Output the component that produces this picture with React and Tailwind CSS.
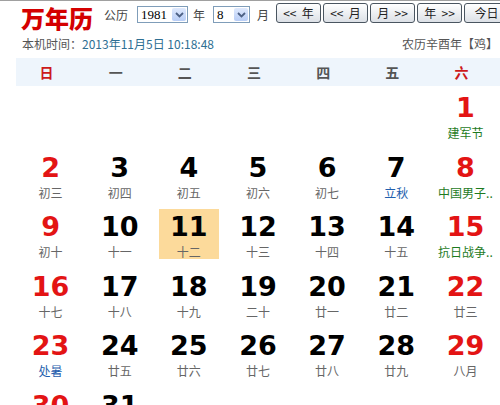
const RED = "text-[#e31414]";

const days = [
  { d: 1, l: "建军节", lc: "text-[#1e7b1e]", red: true },
  { d: 2, l: "初三", red: true },
  { d: 3, l: "初四" },
  { d: 4, l: "初五" },
  { d: 5, l: "初六" },
  { d: 6, l: "初七" },
  { d: 7, l: "立秋", lc: "text-[#1f5fae]" },
  { d: 8, l: "中国男子..", lc: "text-[#1e7b1e]", red: true },
  { d: 9, l: "初十", red: true },
  { d: 10, l: "十一" },
  { d: 11, l: "十二", today: true },
  { d: 12, l: "十三" },
  { d: 13, l: "十四" },
  { d: 14, l: "十五" },
  { d: 15, l: "抗日战争..", lc: "text-[#1e7b1e]", red: true },
  { d: 16, l: "十七", red: true },
  { d: 17, l: "十八" },
  { d: 18, l: "十九" },
  { d: 19, l: "二十" },
  { d: 20, l: "廿一" },
  { d: 21, l: "廿二" },
  { d: 22, l: "廿三", red: true },
  { d: 23, l: "处暑", lc: "text-[#1f5fae]", red: true },
  { d: 24, l: "廿五" },
  { d: 25, l: "廿六" },
  { d: 26, l: "廿七" },
  { d: 27, l: "廿八" },
  { d: 28, l: "廿九" },
  { d: 29, l: "八月", red: true },
  { d: 30, l: "初二", red: true },
  { d: 31, l: "初三" },
];

const weekdays = ["日", "一", "二", "三", "四", "五", "六"];

function Select({ value, width }) {
  return (
    <div className={`flex h-[17px] shrink-0 border border-[#7f9db9] bg-white ${width}`}>
      <span className="flex-1 pl-[3px] text-[13px] leading-[15px] text-black font-['Liberation_Serif',serif]">
        {value}
      </span>
      <span className="m-[1px] flex w-[14px] items-center justify-center rounded-[2px] bg-gradient-to-b from-[#dfe9fd] to-[#b8cdf6]">
        <svg width="9" height="6" viewBox="0 0 9 6">
          <path d="M1 1 L4.5 4.5 L8 1" fill="none" stroke="#4d6185" strokeWidth="1.8" />
        </svg>
      </span>
    </div>
  );
}

function NavButton({ children }) {
  return (
    <button className="flex h-[20px] w-[45px] shrink-0 items-center justify-center rounded-[3px] border border-[#4a5560] bg-gradient-to-b from-white to-[#dce0e6] text-[12px] leading-[14px] text-[#222] whitespace-pre">
      {children}
    </button>
  );
}

function Cell({ item }) {
  if (!item) return <div className="h-[59.5px]" />;
  return (
    <div className="flex h-[59.5px] justify-center">
      <div
        className={`flex h-[50px] w-[60px] flex-col items-center pt-[4px] ${
          item.today ? "bg-[#fcda9b]" : ""
        }`}
      >
        <span
          className={`text-[27px] font-bold leading-[28px] font-['DejaVu_Sans',sans-serif] ${
            item.red ? RED : "text-black"
          }`}
        >
          {item.d}
        </span>
        <span
          className={`mt-[3px] whitespace-nowrap text-[12px] leading-[16px] ${
            item.lc || "text-[#666]"
          }`}
        >
          {item.l}
        </span>
      </div>
    </div>
  );
}

export default function App() {
  const cells = [...Array(6).fill(null), ...days];
  while (cells.length % 7) cells.push(null);

  return (
    <div className="h-[405px] w-[500px] overflow-hidden border-t border-[#a0a0a0] bg-white font-['Noto_Sans_CJK_SC',sans-serif]">
      {/* top bar */}
      <div className="flex h-[29px] items-start whitespace-nowrap pl-[21px]">
        <span className="mt-[3px] w-[72px] shrink-0 text-[24px] font-black leading-[28px] text-[#d40000]">
          万年历
        </span>
        <span className="ml-[11px] mt-[7px] w-[24px] shrink-0 text-[12px] leading-[14px] text-[#444]">
          公历
        </span>
        <div className="ml-[9px] mt-[5px] shrink-0">
          <Select value="1981" width="w-[51px]" />
        </div>
        <span className="ml-[5px] mt-[7px] w-[12px] shrink-0 text-[12px] leading-[14px] text-[#444]">年</span>
        <div className="ml-[8px] mt-[5px] shrink-0">
          <Select value="8" width="w-[37px]" />
        </div>
        <span className="ml-[7px] mt-[7px] w-[12px] shrink-0 text-[12px] leading-[14px] text-[#444]">月</span>
        <div className="ml-[7px] mt-[2px] flex shrink-0 gap-[2px]">
          <NavButton>{"<<\u00a0\u00a0年"}</NavButton>
          <NavButton>{"<<\u00a0\u00a0月"}</NavButton>
          <NavButton>{"月\u00a0\u00a0>>"}</NavButton>
          <NavButton>{"年\u00a0\u00a0>>"}</NavButton>
          <NavButton>{"今日"}</NavButton>
        </div>
      </div>

      {/* time + lunar year */}
      <div className="mt-[6px] flex h-[16px] items-center justify-between whitespace-nowrap pl-[22px] pr-[2px] text-[12px] leading-[16px]">
        <span className="text-[#555]">
          本机时间：<span className="text-[#2e6f93]">2013年11月5日 10:18:48</span>
        </span>
        <span className="text-[#555]">农历辛酉年【鸡】</span>
      </div>

      {/* weekday strip */}
      <div className="ml-[16px] mt-[6px] grid h-[28px] w-[484px] grid-cols-7 items-center bg-[#eef5fc]">
        {weekdays.map((w, i) => (
          <span
            key={w}
            className={`pr-[8px] text-center text-[14px] font-bold leading-[16px] ${
              i === 0 || i === 6 ? "text-[#cc1a1a]" : "text-[#555]"
            }`}
          >
            {w}
          </span>
        ))}
      </div>

      {/* days */}
      <div className="ml-[16px] mt-[4px] grid w-[484px] grid-cols-7">
        {cells.map((c, i) => (
          <Cell key={i} item={c} />
        ))}
      </div>
    </div>
  );
}
